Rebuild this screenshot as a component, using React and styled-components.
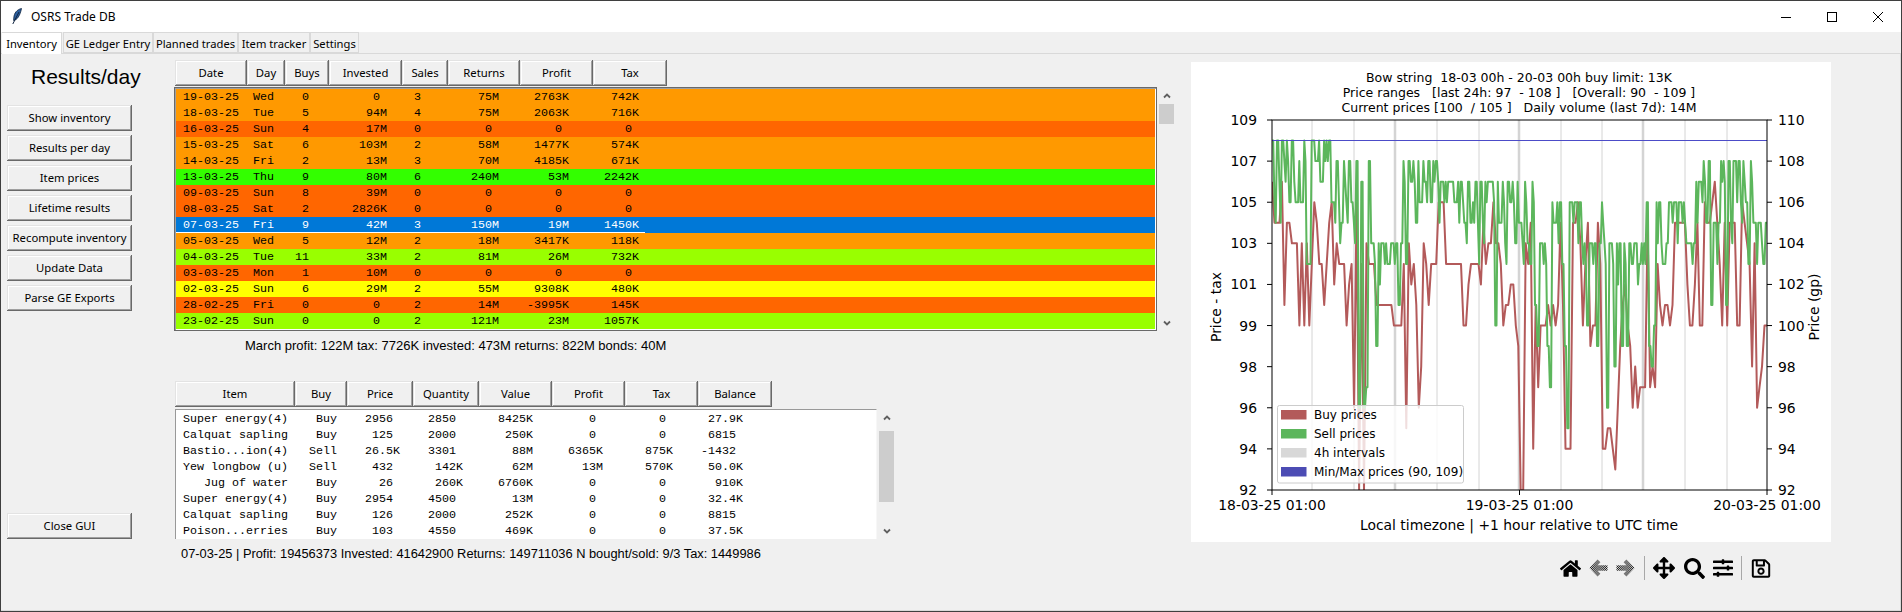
import styled, { createGlobalStyle } from 'styled-components';
import { FaHome, FaArrowsAlt, FaSearch, FaSlidersH, FaRegSave } from 'react-icons/fa';

const UI_FONT = '"Noto Sans", "Open Sans", sans-serif';

const GlobalStyle = createGlobalStyle`
  html, body {
    margin: 0;
    padding: 0;
    overflow: hidden;
    background: #f0f0f0;
  }
  * {
    box-sizing: border-box;
  }
`;

const COLORS = {
  orange: '#ff9900',
  deep: '#ff6600',
  green: '#33ff00',
  lime: '#99ff00',
  yellow: '#ffff00',
  selected: '#0078d7',
};

const DAY_HEADERS = [
  ['Date', 72],
  ['Day', 38],
  ['Buys', 44],
  ['Invested', 73],
  ['Sales', 46],
  ['Returns', 72],
  ['Profit', 73],
  ['Tax', 74],
];

const DAYS = [
  ['orange', '19-03-25', 'Wed', '0', '0 ', '3', '75M', '2763K', '742K'],
  ['orange', '18-03-25', 'Tue', '5', '94M', '4', '75M', '2063K', '716K'],
  ['deep', '16-03-25', 'Sun', '4', '17M', '0', '0 ', '0 ', '0 '],
  ['orange', '15-03-25', 'Sat', '6', '103M', '2', '58M', '1477K', '574K'],
  ['orange', '14-03-25', 'Fri', '2', '13M', '3', '70M', '4185K', '671K'],
  ['green', '13-03-25', 'Thu', '9', '80M', '6', '240M', '53M', '2242K'],
  ['deep', '09-03-25', 'Sun', '8', '39M', '0', '0 ', '0 ', '0 '],
  ['deep', '08-03-25', 'Sat', '2', '2826K', '0', '0 ', '0 ', '0 '],
  ['selected', '07-03-25', 'Fri', '9', '42M', '3', '150M', '19M', '1450K'],
  ['orange', '05-03-25', 'Wed', '5', '12M', '2', '18M', '3417K', '118K'],
  ['lime', '04-03-25', 'Tue', '11', '33M', '2', '81M', '26M', '732K'],
  ['deep', '03-03-25', 'Mon', '1', '10M', '0', '0 ', '0 ', '0 '],
  ['yellow', '02-03-25', 'Sun', '6', '29M', '2', '55M', '9308K', '480K'],
  ['deep', '28-02-25', 'Fri', '0', '0 ', '2', '14M', '-3995K', '145K'],
  ['lime', '23-02-25', 'Sun', '0', '0 ', '2', '121M', '23M', '1057K'],
];

const ITEM_HEADERS = [
  ['Item', 120],
  ['Buy', 52],
  ['Price', 66],
  ['Quantity', 66],
  ['Value', 73],
  ['Profit', 73],
  ['Tax', 73],
  ['Balance', 74],
];

const ITEMS = [
  ['Super energy(4)', 'Buy', '2956 ', '2850 ', '8425K', '0 ', '0 ', '27.9K'],
  ['Calquat sapling', 'Buy', '125 ', '2000 ', '250K', '0 ', '0 ', '6815 '],
  ['Bastio...ion(4)', 'Sell', '26.5K', '3301 ', '88M', '6365K', '875K', '-1432 '],
  ['Yew longbow (u)', 'Sell', '432 ', '142K', '62M', '13M', '570K', '50.0K'],
  ['Jug of water', 'Buy', '26 ', '260K', '6760K', '0 ', '0 ', '910K'],
  ['Super energy(4)', 'Buy', '2954 ', '4500 ', '13M', '0 ', '0 ', '32.4K'],
  ['Calquat sapling', 'Buy', '126 ', '2000 ', '252K', '0 ', '0 ', '8815 '],
  ['Poison...erries', 'Buy', '103 ', '4550 ', '469K', '0 ', '0 ', '37.5K'],
];

const NAV = ['Show inventory', 'Results per day', 'Item prices', 'Lifetime results', 'Recompute inventory', 'Update Data', 'Parse GE Exports'];
const TABS = [
  ['Inventory', 60],
  ['GE Ledger Entry', 90],
  ['Planned trades', 85],
  ['Item tracker', 72],
  ['Settings', 49],
];

// price levels for the plot, one base-36 digit per sample, 0 = top of the axes
const SELL_LEVELS =
  '14131214' + '1342417' + '711213111' + '44245242' + '452' + 'e3ed2' + '66b6666766696' +
  '27232524232422' + '33333334334535435353333a' + '3536343635636739b6' + '66bd' + '45447' + 'bf' +
  '44444' + '66a666b646e66c66b6b6766766' + '4bca4467' + '6' + '4444444' + '6666' + '333' + '2529' +
  '555' + '229' + '2522' + '24247' + '2' + '555575';
const BUY_LEVELS =
  '35553955' + '666a6a6a7' + '45' + '77975486777a87e4i7i6777' + '9999999' + 'aaaa' + '7f68' + '79ec679' +
  '777444' + '7777777' + 'aa8' + '7777' + '85766' + '466' + '7a9988' + 'abii' + '675g9d' +
  'aaa9a9a959ggg5546a75baa57g' + 'gffgheb98abecedd' + 'd5dcd79a99a95555' + '58aa85aa4554' + '357a5a555' + 'aa4567c6edcaa';

const PLOT = { left: 1272, right: 1767, top: 120, bottom: 490 };
const LEVEL_PX = 20.55;

// the sell side flips between neighbouring prices much faster than one sample
const FLIP_PATTERN = [0, 1, 0, 2, 0, 1, 1, 0];
const withFlips = (values) =>
  values.flatMap((v, i) => (v < 7 ? [v, v + FLIP_PATTERN[i % FLIP_PATTERN.length]] : [v, v]));

const levelPoints = (levels, dense) => {
  const values = levels.split('').map((ch) => parseInt(ch, 36));
  const series = dense ? withFlips(values) : values;
  return series
    .map((v, i) => {
      const x = PLOT.left + (i * (PLOT.right - PLOT.left)) / (series.length - 1);
      return `${x.toFixed(1)},${(PLOT.top + v * LEVEL_PX).toFixed(1)}`;
    })
    .join(' ');
};

const Window = styled.div`
  width: 1902px;
  height: 612px;
  border: 1px solid #3f3f3f;
  background: #f0f0f0;
  display: flex;
  flex-direction: column;
  overflow: hidden;
`;

const TitleBar = styled.div`
  height: 31px;
  flex: none;
  background: #fff;
  display: flex;
  align-items: center;
  padding-left: 11px;
  font: 12px ${UI_FONT};
  color: #000;
`;

const TitleText = styled.span`
  margin-left: 9px;
  margin-right: auto;
`;

const WindowButton = styled.div`
  width: 46px;
  height: 31px;
  display: flex;
  align-items: center;
  justify-content: center;
`;

const TabBar = styled.div`
  height: 22px;
  flex: none;
  padding-left: 1px;
  display: flex;
  align-items: flex-end;
  border-bottom: 1px solid #d9d9d9;
`;

const Tab = styled.div`
  width: ${(p) => p.$w}px;
  height: ${(p) => (p.$active ? 22 : 21)}px;
  margin-bottom: ${(p) => (p.$active ? -1 : 0)}px;
  margin-right: ${(p) => (p.$active ? 1 : 0)}px;
  background: ${(p) => (p.$active ? '#fff' : '#f0f0f0')};
  border: 1px solid #d9d9d9;
  border-bottom: ${(p) => (p.$active ? 'none' : '1px solid #d9d9d9')};
  border-left: ${(p) => (p.$active ? 'none' : '1px solid #d9d9d9')};
  font: 11.2px/${(p) => (p.$active ? 21 : 22)}px ${UI_FONT};
  text-align: center;
  color: #000;
  white-space: nowrap;
`;

const Content = styled.div`
  flex: 1;
  display: grid;
  grid-template-columns: 173px 1017px 1fr;
  border-right: 1px solid #d9d9d9;
  border-bottom: 1px solid #d9d9d9;
  min-height: 0;
`;

const Sidebar = styled.div`
  padding-left: 6px;
  display: flex;
  flex-direction: column;
  align-items: flex-start;
`;

const PageTitle = styled.div`
  height: 51px;
  padding: 11px 0 0 24px;
  font: 21px/24px "Liberation Sans", Arial, sans-serif;
  color: #000;
`;

const raised = `
  background: #f0f0f0;
  box-shadow: inset -1px -1px 0 #696969, inset 1px 1px 0 #e3e3e3, inset -2px -2px 0 #a0a0a0, inset 2px 2px 0 #fff;
  font: 11.3px ${UI_FONT};
  color: #000;
  display: flex;
  align-items: center;
  justify-content: center;
  padding-bottom: 2px;
  white-space: nowrap;
`;

const NavButton = styled.div`
  ${raised}
  width: 125px;
  height: 26px;
  margin-bottom: 4px;
`;

const CloseButton = styled(NavButton)`
  margin-top: 198px;
`;

const Center = styled.div`
  padding: 6px 0 0 0;
`;

const HeaderRow = styled.div`
  display: flex;
  height: 26px;
  padding-left: 1px;
  margin-top: ${(p) => p.$top || 0}px;
`;

const HeaderCell = styled.div`
  ${raised}
  width: ${(p) => p.$w}px;
  height: 26px;
`;

const TableRow = styled.div`
  display: flex;
  height: ${(p) => p.$h}px;
  margin-top: ${(p) => p.$top}px;
`;

const DayFrame = styled.div`
  width: 983px;
  height: 100%;
  border: 1px solid #696969;
  box-shadow: inset 1px 1px 0 #a0a0a0, inset -1px -1px 0 #fff;
  padding: 1px;
`;

const DayBand = styled.div`
  height: 16px;
  background: ${(p) => COLORS[p.$tone]};
  color: ${(p) => (p.$tone === 'selected' ? '#fff' : '#000')};
`;

const monoCells = `
  display: grid;
  height: 16px;
  font: 11.67px/16px "Liberation Mono", "Courier New", monospace;
  white-space: pre;
`;

const DayCells = styled.div`
  ${monoCells}
  width: 469px;
  padding-left: 7px;
  grid-template-columns: 70px 27px 29px 78px 34px 78px 70px 70px;
  border-bottom: ${(p) => (p.$underline ? '1px solid #fff' : 'none')};
`;

const Cell = styled.span`
  text-align: ${(p) => (p.$left ? 'left' : 'right')};
`;

const ItemFrame = styled.div`
  width: 702px;
  height: 100%;
  padding-top: 1px;
  background: #fff;
  border-top: 1px solid #999;
  border-left: 1px solid #999;
  border-right: 1px solid #f7f7f7;
  margin-left: 1px;
  overflow: hidden;
`;

const ItemCells = styled.div`
  ${monoCells}
  padding-left: 7px;
  grid-template-columns: 105px 49px 63px 63px 70px 70px 70px 70px;
  color: #000;
`;

const Scrollbar = styled.div`
  width: 15px;
  margin-left: 2px;
  height: 100%;
  display: flex;
  flex-direction: column;
`;

const ScrollArrow = styled.div`
  height: 17px;
  flex: none;
  display: flex;
  align-items: center;
  justify-content: center;
  margin-top: ${(p) => (p.$end ? 'auto' : 0)};
`;

const ScrollThumb = styled.div`
  height: ${(p) => p.$h}px;
  margin-top: ${(p) => p.$top}px;
  background: #cdcdcd;
`;

const Summary = styled.div`
  margin-top: ${(p) => p.$top}px;
  padding-left: ${(p) => p.$left}px;
  height: 16px;
  font: ${(p) => p.$size}px/16px "Liberation Sans", Arial, sans-serif;
  color: #000;
  white-space: pre;
`;

const ChartPane = styled.div`
  padding-top: 8px;
`;

const ChartSvg = styled.svg`
  display: block;
  width: 640px;
  height: 480px;
  background: #fff;
`;

const ChartText = styled.text`
  font-family: "DejaVu Sans", sans-serif;
  font-size: ${(p) => p.$size}px;
  fill: #000;
  text-anchor: ${(p) => p.$anchor || 'middle'};
  dominant-baseline: central;
  white-space: pre;
`;

const Toolbar = styled.div`
  margin-top: 14px;
  padding-left: 369px;
  height: 24px;
  display: flex;
  align-items: center;
  color: #000;
`;

const ToolIcon = styled.div`
  width: ${(p) => p.$w}px;
  display: flex;
  align-items: center;
  justify-content: center;
  margin-right: ${(p) => p.$gap || 0}px;
`;

const ToolSep = styled.div`
  width: 1px;
  height: 24px;
  background: #a8a8a8;
  margin: 0 ${(p) => p.$right}px 0 ${(p) => p.$left}px;
`;

const Chevron = ({ down }) => (
  <svg width="8" height="6" viewBox="0 0 8 6">
    <path d={down ? 'M1 1.5 L4 4.5 L7 1.5' : 'M1 4.5 L4 1.5 L7 4.5'} fill="none" stroke="#606060" strokeWidth="1.8" />
  </svg>
);

const Feather = () => (
  <svg width="10" height="17" viewBox="0 0 10 17">
    <path d="M9.5 0.5 C5 1.5 2 5 1.8 10 L1.6 12.5 C5 12 8 8 9.5 0.5 Z" fill="#2c5f9e" stroke="#10243f" strokeWidth="0.8" />
    <path d="M7 4 L0.8 16" stroke="#10243f" strokeWidth="1" fill="none" />
  </svg>
);

const DitherDefs = () => (
  <svg width="0" height="0" style={{ position: 'absolute' }}>
    <defs>
      <pattern id="dither" width="2" height="2" patternUnits="userSpaceOnUse">
        <rect width="1" height="1" fill="#000" />
        <rect x="1" y="1" width="1" height="1" fill="#000" />
      </pattern>
    </defs>
  </svg>
);

const DitherArrow = ({ flip }) => (
  <svg width="20" height="20" viewBox="0 0 20 20">
    <g transform={flip ? 'translate(20 0) scale(-1 1)' : undefined}>
      <path d="M9 1 L12 4 L9 7 L19.5 7 L19.5 13 L9 13 L12 16 L9 19 L0.5 10 Z" fill="url(#dither)" />
    </g>
  </svg>
);

const GRID_LINES = [
  [1312, 1], [1354, 1], [1395, 2.5], [1437, 1], [1479, 1], [1519, 2.5],
  [1561, 1], [1602, 1], [1643, 2.5], [1685, 1], [1727, 1],
];
const LEFT_TICKS = ['109', '107', '105', '103', '101', '99', '98', '96', '94', '92'];
const RIGHT_TICKS = ['110', '108', '106', '104', '102', '100', '98', '96', '94', '92'];
const LEGEND = [
  ['#b35a5a', 'Buy prices'],
  ['#5cb65c', 'Sell prices'],
  ['#d8d8d8', '4h intervals'],
  ['#4c4cb4', 'Min/Max prices (90, 109)'],
];

const PriceChart = () => {
  const tickStep = (PLOT.bottom - PLOT.top) / 9;
  return (
    <ChartSvg viewBox="1191 62 640 480">
      <defs>
        <clipPath id="plot-area">
          <rect x={PLOT.left} y={PLOT.top} width={PLOT.right - PLOT.left} height={PLOT.bottom - PLOT.top} />
        </clipPath>
      </defs>

      <ChartText $size={12.5} x="1519" y="77">Bow string  18-03 00h - 20-03 00h buy limit: 13K</ChartText>
      <ChartText $size={12.5} x="1519" y="92">Price ranges   [last 24h: 97  - 108 ]   [Overall: 90  - 109 ]</ChartText>
      <ChartText $size={12.5} x="1519" y="107">Current prices [100  / 105 ]   Daily volume (last 7d): 14M</ChartText>

      <g clipPath="url(#plot-area)">
        {GRID_LINES.map(([x, w]) => (
          <line key={x} x1={x} x2={x} y1={PLOT.top} y2={PLOT.bottom} stroke="#d4d4d4" strokeWidth={w} />
        ))}
        <polyline points={levelPoints(BUY_LEVELS)} fill="none" stroke="#b35a5a" strokeWidth="2" strokeLinejoin="round" />
        <polyline points={levelPoints(SELL_LEVELS, true)} fill="none" stroke="#5cb65c" strokeWidth="2" strokeLinejoin="round" />
        <line x1={PLOT.left} x2={PLOT.right} y1="140.5" y2="140.5" stroke="#4c4cc8" strokeWidth="1" />
      </g>

      <rect x={PLOT.left} y={PLOT.top} width={PLOT.right - PLOT.left} height={PLOT.bottom - PLOT.top} fill="none" stroke="#000" strokeWidth="1" />

      {LEFT_TICKS.map((label, i) => {
        const y = PLOT.top + i * tickStep;
        return (
          <g key={i}>
            <line x1={PLOT.left - 5} x2={PLOT.left} y1={y} y2={y} stroke="#000" />
            <ChartText $size={13.9} $anchor="end" x="1257" y={y}>{label}</ChartText>
          </g>
        );
      })}
      {RIGHT_TICKS.map((label, i) => {
        const y = PLOT.top + i * tickStep;
        return (
          <g key={i}>
            <line x1={PLOT.right} x2={PLOT.right + 5} y1={y} y2={y} stroke="#000" />
            <ChartText $size={13.9} $anchor="start" x="1778" y={y}>{label}</ChartText>
          </g>
        );
      })}

      {[PLOT.left, 1519.5, PLOT.right].map((x) => (
        <line key={x} x1={x} x2={x} y1={PLOT.bottom} y2={PLOT.bottom + 5} stroke="#000" />
      ))}
      <ChartText $size={13.9} x={PLOT.left} y="505">18-03-25 01:00</ChartText>
      <ChartText $size={13.9} x="1519.5" y="505">19-03-25 01:00</ChartText>
      <ChartText $size={13.9} x={PLOT.right} y="505">20-03-25 01:00</ChartText>
      <ChartText $size={13.9} x="1519" y="525">Local timezone | +1 hour relative to UTC time</ChartText>
      <ChartText $size={13.9} x="1216" y="307" transform="rotate(-90 1216 307)">Price - tax</ChartText>
      <ChartText $size={13.9} x="1814" y="307" transform="rotate(-90 1814 307)">Price (gp)</ChartText>

      <rect x="1277.5" y="405.5" width="186" height="77.5" rx="2" fill="#fff" fillOpacity="0.8" stroke="#ccc" />
      {LEGEND.map(([color, label], i) => (
        <g key={label}>
          <rect x="1281" y={410 + i * 19} width="25.5" height="9.5" fill={color} />
          <ChartText $size={12} $anchor="start" x="1314" y={415 + i * 19}>{label}</ChartText>
        </g>
      ))}
    </ChartSvg>
  );
};

const App = () => (
  <>
    <GlobalStyle />
    <DitherDefs />
    <Window>
      <TitleBar>
        <Feather />
        <TitleText>OSRS Trade DB</TitleText>
        <WindowButton>
          <svg width="10" height="10" viewBox="0 0 10 10"><line x1="0" x2="10" y1="5.5" y2="5.5" stroke="#000" /></svg>
        </WindowButton>
        <WindowButton>
          <svg width="10" height="10" viewBox="0 0 10 10"><rect x="0.5" y="0.5" width="9" height="9" fill="none" stroke="#000" /></svg>
        </WindowButton>
        <WindowButton>
          <svg width="10" height="10" viewBox="0 0 10 10"><path d="M0 0 L10 10 M10 0 L0 10" stroke="#000" strokeWidth="1" /></svg>
        </WindowButton>
      </TitleBar>

      <TabBar>
        {TABS.map(([label, w], i) => (
          <Tab key={label} $w={w} $active={i === 0}>{label}</Tab>
        ))}
      </TabBar>

      <Content>
        <Sidebar>
          <PageTitle>Results/day</PageTitle>
          {NAV.map((label) => (
            <NavButton key={label}>{label}</NavButton>
          ))}
          <CloseButton>Close GUI</CloseButton>
        </Sidebar>

        <Center>
          <HeaderRow>
            {DAY_HEADERS.map(([label, w]) => (
              <HeaderCell key={label} $w={w}>{label}</HeaderCell>
            ))}
          </HeaderRow>
          <TableRow $h={244} $top={1}>
            <DayFrame>
              {DAYS.map(([tone, ...cells]) => (
                <DayBand key={cells[0]} $tone={tone}>
                  <DayCells $underline={tone === 'selected'}>
                    {cells.map((text, i) => (
                      <Cell key={i} $left={i < 2}>{text}</Cell>
                    ))}
                  </DayCells>
                </DayBand>
              ))}
            </DayFrame>
            <Scrollbar>
              <ScrollArrow><Chevron /></ScrollArrow>
              <ScrollThumb $top={0} $h={20} />
              <ScrollArrow $end><Chevron down /></ScrollArrow>
            </Scrollbar>
          </TableRow>
          <Summary $top={7} $left={71} $size={13}>March profit: 122M tax: 7726K invested: 473M returns: 822M bonds: 40M</Summary>

          <HeaderRow $top={27}>
            {ITEM_HEADERS.map(([label, w]) => (
              <HeaderCell key={label} $w={w}>{label}</HeaderCell>
            ))}
          </HeaderRow>
          <TableRow $h={130} $top={2}>
            <ItemFrame>
              {ITEMS.map((cells, r) => (
                <ItemCells key={r}>
                  {cells.map((text, i) => (
                    <Cell key={i}>{text}</Cell>
                  ))}
                </ItemCells>
              ))}
            </ItemFrame>
            <Scrollbar>
              <ScrollArrow><Chevron /></ScrollArrow>
              <ScrollThumb $top={5} $h={71} />
              <ScrollArrow $end><Chevron down /></ScrollArrow>
            </Scrollbar>
          </TableRow>
          <Summary $top={7} $left={7} $size={12.85}>07-03-25 | Profit: 19456373 Invested: 41642900 Returns: 149711036 N bought/sold: 9/3 Tax: 1449986</Summary>
        </Center>

        <ChartPane>
          <PriceChart />
          <Toolbar>
            <ToolIcon $w={21} $gap={8}><FaHome size={21} /></ToolIcon>
            <ToolIcon $w={19} $gap={8}><DitherArrow /></ToolIcon>
            <ToolIcon $w={19}><DitherArrow flip /></ToolIcon>
            <ToolSep $left={9} $right={8} />
            <ToolIcon $w={22} $gap={8}><FaArrowsAlt size={22} /></ToolIcon>
            <ToolIcon $w={22} $gap={8}><FaSearch size={21} /></ToolIcon>
            <ToolIcon $w={20}><FaSlidersH size={20} /></ToolIcon>
            <ToolSep $left={8} $right={9} />
            <ToolIcon $w={20}><FaRegSave size={21} /></ToolIcon>
          </Toolbar>
        </ChartPane>
      </Content>
    </Window>
  </>
);

export default App;
